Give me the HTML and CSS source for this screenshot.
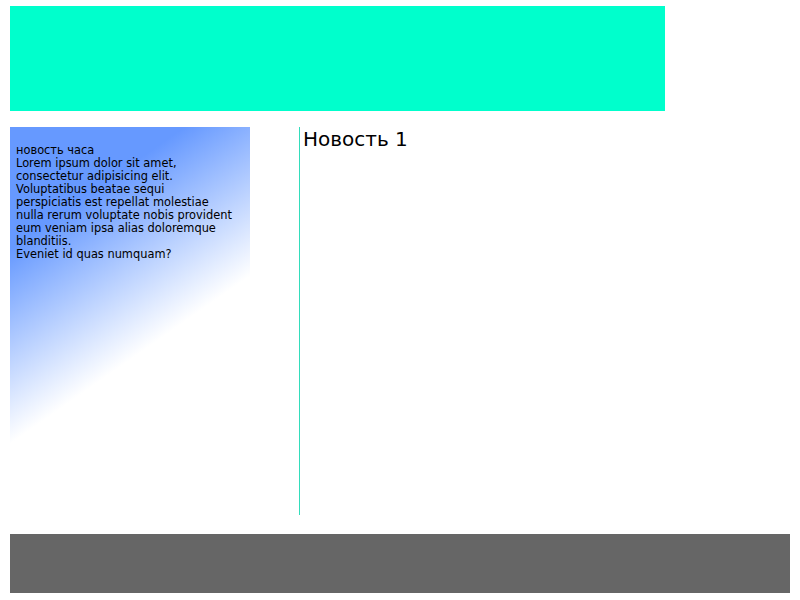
FILE: index.html
```html
<!DOCTYPE html>
<html lang="ru">
<head>
<meta charset="utf-8">
<title>Новости</title>
<link rel="stylesheet" href="styles.css">
</head>
<body>
<div class="wrapper">
  <header class="header"></header>
  <div class="main">
    <aside class="sidebar">
      <p class="news-hour">новость часа<br>Lorem ipsum dolor sit amet, consectetur adipisicing elit. Voluptatibus beatae sequi perspiciatis est repellat molestiae nulla rerum voluptate nobis provident eum veniam ipsa alias doloremque blanditiis.<br>Eveniet id quas numquam?</p>
    </aside>
    <section class="content">
      <h2 class="news-title">Новость 1</h2>
    </section>
  </div>
  <footer class="footer"></footer>
</div>
</body>
</html>
```
FILE: styles.css
```css
html, body {
  margin: 0;
  padding: 0;
  background: #ffffff;
}

body {
  font-family: "DejaVu Sans", Verdana, sans-serif;
  color: #000000;
}

.wrapper {
  padding: 6px 10px 7px 10px;
}

.header {
  width: 655px;
  height: 105px;
  background: #00ffcc;
}

.main {
  display: flex;
  margin-top: 16px;
  height: 388px;
}

.sidebar {
  width: 240px;
  height: 388px;
  box-sizing: border-box;
  padding: 5px 17px 5px 6px;
  background: linear-gradient(145deg, #6699ff 0%, #6699ff 22%, #ffffff 57%);
}

.news-hour {
  margin: 12px 0 0 0;
  font-size: 11.4px;
  line-height: 13px;
}

.content {
  margin-left: 49px;
  flex: 1;
  border-left: 1px solid #33ddbb;
  padding-left: 3px;
}

.news-title {
  margin: 0;
  font-size: 20px;
  font-weight: normal;
}

.footer {
  margin-top: 19px;
  height: 59px;
  background: #666666;
}
```
